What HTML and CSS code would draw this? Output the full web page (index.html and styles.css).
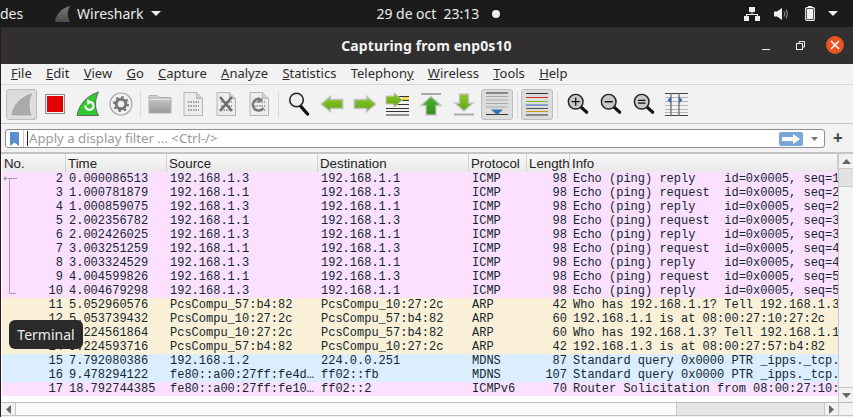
FILE: index.html
```html
<!DOCTYPE html>
<html lang="es">
<head>
    <meta charset="UTF-8">
    <title>Capturing from enp0s10</title>
    <link rel="stylesheet" href="styles.css">
</head>
<body>
    <svg class="defs" width="0" height="0">
        <defs>
            <linearGradient id="gArrow" x1="0" y1="0" x2="0" y2="1"><stop offset="0" stop-color="#8ccb2a"/><stop offset="1" stop-color="#5fa612"/></linearGradient>
            <linearGradient id="gUp" x1="0" y1="0" x2="0" y2="1"><stop offset="0" stop-color="#48b82a"/><stop offset="1" stop-color="#2f8f18"/></linearGradient>
            <linearGradient id="gFin" x1="0" y1="0" x2="0" y2="1"><stop offset="0" stop-color="#7c7c7c"/><stop offset="1" stop-color="#4a4a4a"/></linearGradient>
            <linearGradient id="gFolder" x1="0" y1="0" x2="0" y2="1"><stop offset="0" stop-color="#d0d0d0"/><stop offset="1" stop-color="#989898"/></linearGradient>
            <symbol id="doc" viewBox="0 0 22 24">
                <path d="M2 .5H14.500L20.500 6.500V23.500H2Z" fill="#ececec" stroke="#b4b4b4"/>
                <path d="M14.500 .5V6.500H20.500" fill="#d0d0d0" stroke="#b4b4b4"/>
                <path d="M6 10H17M6 14H17M6 18H17" stroke="#a0a0a0" stroke-width="2" stroke-dasharray="1.500 1"/>
            </symbol>
            <symbol id="lens" viewBox="0 0 24 24">
                <path d="M14.500 14.500L21.500 21" stroke="#111" stroke-width="3.400" stroke-linecap="round"/>
                <circle cx="9.500" cy="9.500" r="8" fill="#c8c8c8" stroke="#222" stroke-width="1.600"/>
            </symbol>
        </defs>
    </svg>

    <div class="topbar">
        <span class="activities">des</span>
        <svg class="top-fin" width="17" height="18" viewBox="0 0 17 18"><path d="M1 17C2 9 8 3 16 1C13 6 13 12 16 17Z" fill="url(#gFin)"/></svg>
        <span class="app-name">Wireshark</span>
        <svg class="top-caret" width="10" height="5" viewBox="0 0 10 5"><path d="M0 0H10L5 5Z" fill="#eee"/></svg>
        <span class="clock">29 de oct&nbsp; 23:13</span>
        <span class="clock-dot"></span>
        <svg class="tray-net" width="16" height="14" viewBox="0 0 16 14" fill="#eee"><rect x="5" y="0" width="6" height="5"/><rect x="0" y="9" width="5" height="5"/><rect x="11" y="9" width="5" height="5"/><path d="M7.500 5H8.500V7H14V9H13V8H3V9H2V7H7.500Z"/></svg>
        <svg class="tray-vol" width="15" height="14" viewBox="0 0 15 14"><path d="M0 4.500H3L8 1V13L3 9.500H0Z" fill="#eee"/><path d="M10 4.500Q11.500 7 10 9.500M12 2.500Q14.500 7 12 11.500" fill="none" stroke="#888" stroke-width="1.200"/></svg>
        <svg class="tray-bat" width="10" height="15" viewBox="0 0 10 15"><rect x="3" y="0" width="4" height="2" fill="#eee"/><rect x="0.700" y="1.700" width="8.600" height="12.600" rx="1" fill="none" stroke="#eee" stroke-width="1.200"/><rect x="2" y="3" width="6" height="10" fill="#eee"/></svg>
        <svg class="tray-caret" width="10" height="5" viewBox="0 0 10 5"><path d="M0 0H10L5 5Z" fill="#eee"/></svg>
    </div>

    <div class="window">
        <div class="titlebar">
            <span class="title">Capturing from enp0s10</span>
            <div class="win-buttons">
                <span class="win-min"></span>
                <svg class="win-max" width="9" height="9" viewBox="0 0 9 9" fill="none" stroke="#eee"><rect x="0.500" y="2.500" width="6" height="6"/><path d="M3 2V0.500H8.500V6H7"/></svg>
                <span class="win-close"><svg width="10" height="10" viewBox="0 0 10 10"><path d="M1 1L9 9M9 1L1 9" stroke="#fff" stroke-width="1.500"/></svg></span>
            </div>
        </div>

        <div class="menubar">
            <span><u>F</u>ile</span>
            <span><u>E</u>dit</span>
            <span><u>V</u>iew</span>
            <span><u>G</u>o</span>
            <span><u>C</u>apture</span>
            <span><u>A</u>nalyze</span>
            <span><u>S</u>tatistics</span>
            <span>Telephon<u>y</u></span>
            <span><u>W</u>ireless</span>
            <span><u>T</u>ools</span>
            <span><u>H</u>elp</span>
        </div>

        <div class="toolbar">
            <div class="tool active"><svg width="26" height="26" viewBox="0 0 26 26"><path d="M1.500 25C3 14 11 5 24.500 1C20.500 9 20 17 23.500 25Z" fill="#aaa" stroke="#e8e8e8"/></svg></div>
            <div class="tool"><svg width="22" height="22" viewBox="0 0 22 22"><rect x="1.500" y="1.500" width="19" height="19" fill="#f4f4f4" stroke="#8c8c8c"/><rect x="3" y="3" width="16" height="16" fill="#e10000"/></svg></div>
            <div class="tool"><svg width="24" height="26" viewBox="0 0 24 26"><path d="M1 24.500C3 14 10 5 22.500 1C18.500 9 18.500 17 22.500 24.500Z" fill="#2fcb2f" stroke="#666"/><path d="M9.500 14.500A4 4 0 1 0 14.500 11" fill="none" stroke="#fff" stroke-width="2.200"/><path d="M11 8L16 11L11.500 14Z" fill="#fff"/></svg></div>
            <div class="tool"><svg width="24" height="24" viewBox="0 0 24 24"><circle cx="12" cy="12" r="11" fill="#f2f2f2" stroke="#aaa" stroke-width="1.200"/><circle cx="12" cy="12" r="4.800" fill="none" stroke="#777" stroke-width="3"/><circle cx="12" cy="12" r="7" fill="none" stroke="#777" stroke-width="2" stroke-dasharray="2.500 3"/></svg></div>
            <span class="sep sep-a"></span>
            <div class="tool"><svg width="24" height="20" viewBox="0 0 24 20"><path d="M1 1.500H9L11 3.500H23V19H1Z" fill="url(#gFolder)" stroke="#b0b0b0"/><path d="M1.500 5.500H22.500" stroke="#e6e6e6"/></svg></div>
            <div class="tool"><svg width="22" height="24"><use href="#doc"/></svg></div>
            <div class="tool"><svg width="22" height="24" viewBox="0 0 22 24"><use href="#doc" width="22" height="24"/><path d="M5 5L17 19M17 5L5 19" stroke="#6c6c6c" stroke-width="2.500"/></svg></div>
            <div class="tool"><svg width="22" height="24" viewBox="0 0 22 24"><use href="#doc" width="22" height="24"/><path d="M15.500 16A5.800 5.800 0 1 1 14 8" fill="none" stroke="#7a7a7a" stroke-width="2.400"/><path d="M10 5L15 8.500L10 11Z" fill="#7a7a7a"/></svg></div>
            <span class="sep sep-b"></span>
            <div class="tool"><svg width="22" height="24" viewBox="0 0 22 24"><path d="M12.500 14L19.500 22" stroke="#111" stroke-width="3.400" stroke-linecap="round"/><circle cx="8.500" cy="8" r="6.800" fill="#eee" stroke="#222" stroke-width="1.500"/></svg></div>
            <div class="tool"><svg width="24" height="18" viewBox="0 0 24 18"><path d="M1.200 9L10.500 1.200V4.500H22.800V13.500H10.500V16.800Z" fill="url(#gArrow)" stroke="#c4c4c4" stroke-width="1.400"/></svg></div>
            <div class="tool"><svg width="24" height="18" viewBox="0 0 24 18"><path d="M22.800 9L13.500 1.200V4.500H1.200V13.500H13.500V16.800Z" fill="url(#gArrow)" stroke="#c4c4c4" stroke-width="1.400"/></svg></div>
            <div class="tool"><svg width="25" height="24" viewBox="0 0 25 24"><path d="M1 4.500H24M1 8.500H24M8 12.500H24M1 16.500H24M1 19.500H24M1 23H24" stroke="#333"/><rect x="17" y="5" width="7" height="3" fill="#f4d94a"/><path d="M17.500 8L9 .8V4H1V12H9V15.200Z" fill="url(#gArrow)" stroke="#c4c4c4"/></svg></div>
            <div class="tool"><svg width="24" height="23" viewBox="0 0 24 23"><path d="M2 1H22" stroke="#aaa" stroke-width="2"/><path d="M12 3.500L22 12.500H17V22H7V12.500H2Z" fill="url(#gUp)" stroke="#c4c4c4" stroke-width="1.400"/></svg></div>
            <div class="tool"><svg width="24" height="23" viewBox="0 0 24 23"><path d="M12 18L21 10H16.500V1H7.500V10H3Z" fill="url(#gArrow)" stroke="#c4c4c4" stroke-width="1.400"/><path d="M2 21.500H22" stroke="#aaa" stroke-width="2"/></svg></div>
            <div class="tool active wide"><svg width="24" height="24" viewBox="0 0 24 24"><path d="M1 4.500H23M1 8H23M1 11.500H23M1 15H23" stroke="#aaa"/><path d="M1 1H23M1 22.500H23" stroke="#333"/><path d="M12 23L6 17.500H18Z" fill="#3a6eb5"/></svg></div>
            <span class="sep sep-c"></span>
            <div class="tool active wide"><svg width="24" height="24" viewBox="0 0 24 24" fill="none"><path d="M1 1.500H23" stroke="#333"/><path d="M1 5.500H23" stroke="#d82a2a"/><path d="M1 9.500H23" stroke="#7ac21a"/><path d="M1 13H23" stroke="#3465c0"/><path d="M1 16.500H23" stroke="#555"/><path d="M1 19.500H23" stroke="#c79a1a"/><path d="M1 23H23" stroke="#333"/></svg></div>
            <span class="sep sep-d"></span>
            <div class="tool"><svg width="22" height="22" viewBox="0 0 24 24"><use href="#lens" width="24" height="24"/><path d="M5 9.500H14M9.500 5V14" stroke="#111" stroke-width="1.400"/></svg></div>
            <div class="tool"><svg width="22" height="22" viewBox="0 0 24 24"><use href="#lens" width="24" height="24"/><path d="M5 9.500H14" stroke="#111" stroke-width="1.600"/></svg></div>
            <div class="tool"><svg width="22" height="22" viewBox="0 0 24 24"><use href="#lens" width="24" height="24"/><path d="M5.500 8H13.500M5.500 11H13.500" stroke="#111" stroke-width="1.400"/></svg></div>
            <div class="tool"><svg width="23" height="23" viewBox="0 0 23 23"><path d="M0 4.500H23M0 8.500H23M0 12.500H23M0 16.500H23M0 19.500H23" stroke="#b5b5b5"/><path d="M0 .5H23M0 22.500H23" stroke="#444"/><path d="M6 0V23M14 0V23" stroke="#666" stroke-width="1.200"/><path d="M6 3.500V10.500L2.500 7ZM14 3.500V10.500L17.500 7Z" fill="#3a6eb5"/></svg></div>
        </div>

        <div class="filterbar">
            <div class="filter-box">
                <svg class="bookmark" width="9" height="14" viewBox="0 0 9 14"><path d="M0 0H9V14L4.500 10.500L0 14Z" fill="#5b8fd0"/></svg>
                <span class="filter-sep"></span>
                <span class="placeholder">Apply a display filter ... &lt;Ctrl-/&gt;</span>
                <span class="apply-btn"><svg width="18" height="10" viewBox="0 0 18 10"><path d="M0 3H11V0L18 5L11 10V7H0Z" fill="#fff"/></svg></span>
                <svg class="filter-caret" width="7" height="4" viewBox="0 0 7 4"><path d="M0 0H7L3.500 4Z" fill="#777"/></svg>
            </div>
            <span class="add-btn">+</span>
        </div>

        <div class="packets">
            <div class="packet-list">
                <div class="row header">
                    <span>No.</span><span>Time</span><span>Source</span><span>Destination</span><span>Protocol</span><span>Length</span><span>Info</span>
                </div>
                <div class="row icmp"><span class="num">2</span><span>0.000086513</span><span>192.168.1.3</span><span>192.168.1.1</span><span>ICMP</span><span class="num">98</span><span>Echo (ping) reply    id=0x0005, seq=1/256, ttl=64</span></div>
                <div class="row icmp"><span class="num">3</span><span>1.000781879</span><span>192.168.1.1</span><span>192.168.1.3</span><span>ICMP</span><span class="num">98</span><span>Echo (ping) request  id=0x0005, seq=2/512, ttl=64</span></div>
                <div class="row icmp"><span class="num">4</span><span>1.000859075</span><span>192.168.1.3</span><span>192.168.1.1</span><span>ICMP</span><span class="num">98</span><span>Echo (ping) reply    id=0x0005, seq=2/512, ttl=64</span></div>
                <div class="row icmp"><span class="num">5</span><span>2.002356782</span><span>192.168.1.1</span><span>192.168.1.3</span><span>ICMP</span><span class="num">98</span><span>Echo (ping) request  id=0x0005, seq=3/768, ttl=64</span></div>
                <div class="row icmp"><span class="num">6</span><span>2.002426025</span><span>192.168.1.3</span><span>192.168.1.1</span><span>ICMP</span><span class="num">98</span><span>Echo (ping) reply    id=0x0005, seq=3/768, ttl=64</span></div>
                <div class="row icmp"><span class="num">7</span><span>3.003251259</span><span>192.168.1.1</span><span>192.168.1.3</span><span>ICMP</span><span class="num">98</span><span>Echo (ping) request  id=0x0005, seq=4/1024, ttl=64</span></div>
                <div class="row icmp"><span class="num">8</span><span>3.003324529</span><span>192.168.1.3</span><span>192.168.1.1</span><span>ICMP</span><span class="num">98</span><span>Echo (ping) reply    id=0x0005, seq=4/1024, ttl=64</span></div>
                <div class="row icmp"><span class="num">9</span><span>4.004599826</span><span>192.168.1.1</span><span>192.168.1.3</span><span>ICMP</span><span class="num">98</span><span>Echo (ping) request  id=0x0005, seq=5/1280, ttl=64</span></div>
                <div class="row icmp"><span class="num">10</span><span>4.004679298</span><span>192.168.1.3</span><span>192.168.1.1</span><span>ICMP</span><span class="num">98</span><span>Echo (ping) reply    id=0x0005, seq=5/1280, ttl=64</span></div>
                <div class="row arp"><span class="num">11</span><span>5.052960576</span><span>PcsCompu_57:b4:82</span><span>PcsCompu_10:27:2c</span><span>ARP</span><span class="num">42</span><span>Who has 192.168.1.1? Tell 192.168.1.3</span></div>
                <div class="row arp"><span class="num">12</span><span>5.053739432</span><span>PcsCompu_10:27:2c</span><span>PcsCompu_57:b4:82</span><span>ARP</span><span class="num">60</span><span>192.168.1.1 is at 08:00:27:10:27:2c</span></div>
                <div class="row arp"><span class="num">13</span><span>5.224561864</span><span>PcsCompu_10:27:2c</span><span>PcsCompu_57:b4:82</span><span>ARP</span><span class="num">60</span><span>Who has 192.168.1.3? Tell 192.168.1.1</span></div>
                <div class="row arp"><span class="num">14</span><span>5.224593716</span><span>PcsCompu_57:b4:82</span><span>PcsCompu_10:27:2c</span><span>ARP</span><span class="num">42</span><span>192.168.1.3 is at 08:00:27:57:b4:82</span></div>
                <div class="row udp"><span class="num">15</span><span>7.792080386</span><span>192.168.1.2</span><span>224.0.0.251</span><span>MDNS</span><span class="num">87</span><span>Standard query 0x0000 PTR _ipps._tcp.local</span></div>
                <div class="row udp"><span class="num">16</span><span>9.478294122</span><span>fe80::a00:27ff:fe4d…</span><span>ff02::fb</span><span>MDNS</span><span class="num">107</span><span>Standard query 0x0000 PTR _ipps._tcp.local</span></div>
                <div class="row icmp"><span class="num">17</span><span>18.792744385</span><span>fe80::a00:27ff:fe10…</span><span>ff02::2</span><span>ICMPv6</span><span class="num">70</span><span>Router Solicitation from 08:00:27:10:27:2c</span></div>
                <svg class="tree-line" width="16" height="125" viewBox="0 0 16 125" fill="none" stroke="#a79aa7"><path d="M1 6.500H14M6.500 6.500V121.500H13"/><path d="M3 4.500L1 6.500L3 8.500" stroke="#777"/></svg>
            </div>
            <div class="vscroll">
                <span class="v-btn"><svg width="9" height="5" viewBox="0 0 9 5"><path d="M4.500 0L9 5H0Z" fill="#666"/></svg></span>
                <span class="v-thumb"></span>
                <span class="v-trough"></span>
                <span class="v-btn"><svg width="9" height="5" viewBox="0 0 9 5"><path d="M0 0H9L4.500 5Z" fill="#666"/></svg></span>
            </div>
        </div>

        <div class="hscroll">
            <span class="h-btn"><svg width="5" height="9" viewBox="0 0 5 9"><path d="M5 0V9L0 4.500Z" fill="#666"/></svg></span>
            <span class="h-thumb"></span>
            <span class="h-trough"></span>
            <span class="h-btn"><svg width="5" height="9" viewBox="0 0 5 9"><path d="M0 0V9L5 4.500Z" fill="#666"/></svg></span>
            <span class="h-corner"></span>
        </div>
    </div>

    <div class="tooltip">Terminal</div>
</body>
</html>
```

FILE: styles.css
```css
/* Page */
html, body {
    margin: 0;
    padding: 0;
    width: 853px;
    height: 417px;
    overflow: hidden;
}
body {
    position: relative;
    background: #f0f0f0;
    font-family: "Noto Sans", sans-serif;
}
.defs {
    position: absolute;
}

/* Ubuntu top bar */
.topbar {
    display: flex;
    align-items: center;
    height: 27px;
    background: #1b1b1b;
    color: #ececec;
    font-size: 14px;
}
.activities {
    width: 19px;
}
.top-fin {
    margin-left: 35px;
}
.app-name {
    margin-left: 6px;
}
.top-caret {
    margin-left: 7px;
}
.clock {
    margin-left: 216px;
    letter-spacing: -0.03px;
}
.clock-dot {
    width: 8px;
    height: 8px;
    margin-left: 13px;
    border-radius: 50%;
    background: #eee;
}
.tray-net {
    margin-left: 244px;
}
.tray-vol {
    margin-left: 14px;
}
.tray-bat {
    margin-left: 16px;
}
.tray-caret {
    margin-left: 13px;
}

/* Window */
.window {
    height: 390px;
    border-left: 1px solid #2c1a1e;
    box-sizing: border-box;
    display: flex;
    flex-direction: column;
}
.titlebar {
    position: relative;
    display: flex;
    align-items: center;
    justify-content: center;
    flex: 0 0 37px;
    background: #312f2f;
    color: #f2f2f2;
    font-size: 14px;
    font-weight: bold;
}
.title {
    margin-right: 1px;
    letter-spacing: 0.1px;
}
.win-buttons {
    position: absolute;
    right: 9px;
    top: 9px;
    display: flex;
    align-items: center;
}
.win-min {
    width: 8px;
    height: 1px;
    margin-top: 8px;
    background: #eee;
}
.win-max {
    margin-left: 26px;
}
.win-close {
    display: flex;
    align-items: center;
    justify-content: center;
    width: 18px;
    height: 18px;
    margin-left: 21px;
    border-radius: 50%;
    background: #e95420;
}

.menubar {
    display: flex;
    align-items: center;
    flex: 0 0 20px;
    padding: 0 0 2px 10px;
    gap: 14.3px;
    box-sizing: border-box;
    background: #f2f2f2;
    border-bottom: 1px solid #d4d4d4;
    color: #2c2c2c;
    font-size: 13px;
}

.toolbar {
    display: flex;
    align-items: center;
    flex: 0 0 39px;
    padding-left: 4px;
    box-sizing: border-box;
    background: #f2f2f2;
    border-bottom: 1px solid #c4c4c4;
}
.tool {
    display: flex;
    align-items: center;
    justify-content: center;
    width: 33px;
    height: 31px;
    flex: none;
    box-sizing: border-box;
}
.tool.active {
    width: 31px;
    margin: 0 1px;
    background: #dcdcdc;
    border: 1px solid #bdbdbd;
    border-radius: 3px;
}
.tool.active.wide {
    width: 32px;
}
.sep {
    width: 1px;
    height: 27px;
    flex: none;
    background: #dcdcdc;
}
.sep-a {
    margin: 0 2px 0 3px;
}
.sep-b {
    margin: 0 3px;
}
.sep-c {
    margin: 0 2px 0 3px;
}
.sep-d {
    margin: 0 3px;
}

.filterbar {
    display: flex;
    align-items: flex-start;
    flex: 0 0 30px;
    padding: 5px 9px 0 4px;
    background: #f2f2f2;
    border-bottom: 2px solid #c4c4c4;
    box-sizing: border-box;
}
.filter-box {
    display: flex;
    align-items: center;
    width: 820px;
    height: 19px;
    box-sizing: border-box;
    background: #fff;
    border: 1px solid #8e8e8e;
    border-radius: 3px;
    font-size: 13.2px;
}
.bookmark {
    margin-left: 4px;
}
.filter-sep {
    width: 1px;
    height: 17px;
    margin-left: 4px;
    background: #c8c8c8;
}
.placeholder {
    flex: 1;
    margin-left: 3px;
    padding-left: 1px;
    border-left: 1px solid #222;
    color: #9a9a9a;
    line-height: 15px;
}
.apply-btn {
    display: flex;
    align-items: center;
    justify-content: center;
    width: 24px;
    height: 14px;
    border-radius: 2px;
    background: #7ba7d8;
}
.filter-caret {
    margin: 0 6px 0 8px;
}
.add-btn {
    margin-left: 8px;
    color: #444;
    font-size: 17px;
    font-weight: bold;
    line-height: 18px;
}

/* Packet list */
.packets {
    display: flex;
    flex: 0 0 249px;
    background: #fff;
    border-bottom: 1px solid #bcbcbc;
    box-sizing: border-box;
    padding-left: 1px;
}
.packet-list {
    position: relative;
    width: 836px;
    overflow: hidden;
}
.row {
    display: grid;
    grid-template-columns: 64px 101px 151px 151px 58px 43px 268px;
    height: 14px;
    color: #12272e;
    font-family: "Liberation Mono", monospace;
    font-size: 12px;
    line-height: 13px;
    white-space: pre;
}
.row span {
    overflow: hidden;
    padding: 1px 0 0 3px;
}
.row span.num {
    padding: 1px 3px 0 0;
    text-align: right;
}
.icmp {
    background: #fce0ff;
}
.arp {
    background: #faf0d7;
}
.udp {
    background: #daeeff;
}
.header {
    height: 18px;
    background: linear-gradient(#f8f8f8, #e9e9e9);
    color: #222;
    font-family: "Liberation Sans", sans-serif;
    font-size: 13.3px;
    line-height: 17px;
}
.header span {
    border-right: 1px solid #d0d0d0;
    padding: 1px 0 0 2px;
}
.tree-line {
    position: absolute;
    left: 1px;
    top: 18px;
}

.vscroll {
    display: flex;
    flex-direction: column;
    width: 15px;
    flex: none;
    background: #f2f2f2;
    border-left: 1px solid #c8c8c8;
    box-sizing: border-box;
}
.v-btn {
    display: flex;
    align-items: center;
    justify-content: center;
    flex: 0 0 14px;
}
.v-thumb {
    flex: 0 0 19px;
    background: #e2e2e2;
    border-top: 1px solid #c8c8c8;
    border-bottom: 1px solid #c8c8c8;
    box-sizing: border-box;
}
.v-trough {
    flex: 1;
    background: #f4f4f4;
    border-bottom: 1px solid #c8c8c8;
}

.hscroll {
    display: flex;
    flex: 0 0 13px;
    background: #f2f2f2;
    border-bottom: 1px solid #c4c4c4;
    box-sizing: border-box;
    padding-left: 1px;
}
.h-btn {
    display: flex;
    align-items: center;
    justify-content: center;
    flex: 0 0 13px;
}
.h-thumb {
    flex: 0 0 662px;
    background: #fafafa;
    border-left: 1px solid #c8c8c8;
    border-right: 1px solid #c8c8c8;
    box-sizing: border-box;
}
.h-trough {
    flex: 1;
    background: #e6e6e6;
    border-right: 1px solid #c8c8c8;
}
.h-corner {
    flex: 0 0 15px;
    border-left: 1px solid #c8c8c8;
    box-sizing: border-box;
}

.tooltip {
    position: absolute;
    left: 9px;
    top: 320px;
    width: 74px;
    height: 29px;
    background: #2a2a2a;
    border-radius: 6px;
    color: #ececec;
    font-size: 14px;
    line-height: 29px;
    text-align: center;
}
```
